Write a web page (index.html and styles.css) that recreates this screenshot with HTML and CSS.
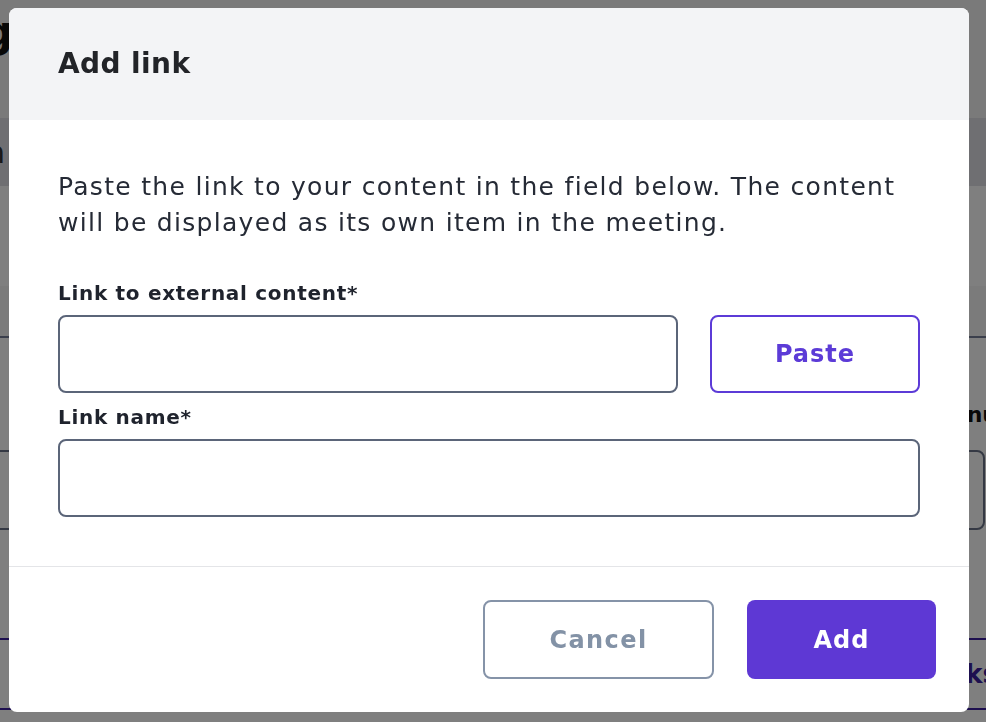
FILE: index.html
```html
<!DOCTYPE html>
<html lang="en">
<head>
<meta charset="utf-8">
<title>Add link</title>
<link rel="stylesheet" href="styles.css">
</head>
<body>
<div class="page">
  <div class="page-top"><span class="page-title">g</span></div>
  <div class="page-sub"><span class="page-subtext">n</span></div>
  <div class="page-gap"></div>
  <div class="page-row"></div>
  <div class="page-field">
    <div class="page-label">Menu</div>
    <div class="page-input"></div>
  </div>
  <div class="page-btn"><span class="page-btn-text">Links</span></div>
</div>

<div class="overlay">
  <div class="modal" role="dialog" aria-labelledby="modal-title">
    <div class="modal-header">
      <h2 class="modal-title" id="modal-title">Add link</h2>
    </div>
    <div class="modal-body">
      <p class="modal-text">Paste the link to your content in the field below. The content will be displayed as its own item in the meeting.</p>
      <label class="field-label" for="link-url">Link to external content*</label>
      <div class="field-row">
        <input class="text-input url-input" id="link-url" type="text">
        <button class="btn btn-paste" type="button">Paste</button>
      </div>
      <label class="field-label field-label-second" for="link-name">Link name*</label>
      <input class="text-input name-input" id="link-name" type="text">
    </div>
    <div class="modal-footer">
      <button class="btn btn-cancel" type="button">Cancel</button>
      <button class="btn btn-add" type="button">Add</button>
    </div>
  </div>
</div>
</body>
</html>
```

FILE: styles.css
```css
* {
  box-sizing: border-box;
}

html, body {
  margin: 0;
  padding: 0;
  width: 986px;
  height: 722px;
  overflow: hidden;
  font-family: "DejaVu Sans", "Noto Sans", sans-serif;
}

/* ---------- background page ---------- */
.page {
  width: 986px;
  height: 722px;
  background: #ffffff;
  display: flex;
  flex-direction: column;
  overflow: hidden;
}

.page-top {
  height: 118px;
  background: #f4f4f4;
  display: flex;
  align-items: flex-start;
  padding-top: 10px;
}

.page-title {
  font-size: 44px;
  font-weight: 700;
  color: #111;
  margin-left: -18px;
  line-height: 44px;
}

.page-sub {
  height: 68px;
  background: #dedee4;
  display: flex;
  align-items: center;
}

.page-subtext {
  font-size: 30px;
  color: #333;
  margin-left: -14px;
}

.page-gap {
  height: 100px;
}

.page-row {
  height: 52px;
  background: #f6f6f6;
  border-bottom: 2px solid #777f98;
}

.page-field {
  display: flex;
  flex-direction: column;
  padding-top: 64px;
}

.page-label {
  align-self: flex-end;
  margin-right: -12px;
  font-size: 22px;
  font-weight: 700;
  color: #111;
  height: 48px;
}

.page-input {
  margin-left: -20px;
  width: 1005px;
  height: 80px;
  border: 2px solid #6a7388;
  border-radius: 8px;
}

.page-btn {
  margin-top: 108px;
  margin-left: -20px;
  width: 1060px;
  height: 72px;
  border: 2px solid #3a1f9e;
  display: flex;
  align-items: center;
  justify-content: flex-end;
  padding-right: 40px;
}

.page-btn-text {
  font-size: 26px;
  font-weight: 700;
  color: #3a1f9e;
}

/* ---------- overlay & modal ---------- */
.overlay {
  position: fixed;
  inset: 0;
  background: rgba(0, 0, 0, 0.5);
  display: flex;
  align-items: flex-start;
  justify-content: flex-start;
}

.modal {
  margin-top: 8px;
  margin-left: 9px;
  width: 960px;
  height: 704px;
  background: #ffffff;
  border-radius: 8px;
  overflow: hidden;
  display: flex;
  flex-direction: column;
}

.modal-header {
  height: 112px;
  background: #f3f4f6;
  display: flex;
  align-items: center;
  padding: 0 49px;
}

.modal-title {
  margin: 0;
  font-size: 28px;
  font-weight: 700;
  letter-spacing: 0.4px;
  color: #222428;
  line-height: 36px;
}

.modal-body {
  padding: 49px 49px 49px 49px;
  display: flex;
  flex-direction: column;
}

.modal-text {
  margin: 0;
  font-size: 25px;
  letter-spacing: 1.3px;
  line-height: 36px;
  color: #252a35;
}

.field-label {
  display: block;
  margin-top: 40px;
  margin-bottom: 10px;
  font-size: 20px;
  font-weight: 700;
  letter-spacing: 0.7px;
  line-height: 24px;
  color: #1f232d;
}

.field-label-second {
  margin-top: 12px;
}

.field-row {
  display: flex;
  gap: 32px;
}

.text-input {
  height: 78px;
  border: 2px solid #5b6579;
  border-radius: 8px;
  background: #fff;
  font-family: inherit;
  font-size: 22px;
  padding: 0 16px;
  outline: none;
}

.url-input {
  width: 620px;
}

.name-input {
  width: 862px;
}

.btn {
  font-family: inherit;
  font-weight: 700;
  font-size: 24px;
  letter-spacing: 1px;
  border-radius: 8px;
  cursor: pointer;
  display: flex;
  align-items: center;
  justify-content: center;
  padding: 0;
}

.btn-paste {
  width: 210px;
  height: 78px;
  background: #fff;
  border: 2px solid #5c3bd7;
  color: #5c3bd7;
}

.modal-footer {
  border-top: 1px solid #e4e5e8;
  padding: 33px;
  display: flex;
  justify-content: flex-end;
  gap: 33px;
}

.btn-cancel {
  width: 231px;
  height: 79px;
  background: #fff;
  border: 2px solid #8593a8;
  color: #8392a6;
  letter-spacing: 1.4px;
}

.btn-add {
  width: 189px;
  height: 79px;
  background: #5e38d4;
  border: none;
  color: #ffffff;
}
```
